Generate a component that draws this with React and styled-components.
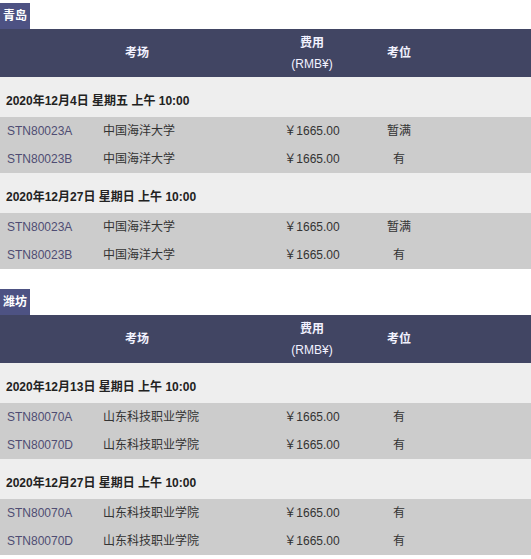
import React from "react";
import styled, { createGlobalStyle } from "styled-components";

const GlobalStyle = createGlobalStyle`
  body {
    margin: 0;
    background: #fff;
    font-family: "Liberation Sans", Arial, "Noto Sans CJK SC", sans-serif;
    font-size: 12px;
    color: #333;
  }
`;

const Page = styled.div`
  width: 531px;
  padding-top: 3px;
  display: flex;
  flex-direction: column;
  gap: 20px;
`;

const Section = styled.section`
  display: flex;
  flex-direction: column;
  align-items: flex-start;
`;

const CityTag = styled.div`
  background: #4d5283;
  color: #fff;
  font-weight: bold;
  font-size: 12px;
  height: 26px;
  line-height: 26px;
  padding: 0 3px;
`;

const Grid = styled.div`
  width: 100%;
  display: grid;
  grid-template-columns: 96px 178px 76px 98px 1fr;
`;

const HeadCell = styled.div`
  grid-column: ${props => props.span || "auto"};
  background: #414563;
  color: #f2f2ff;
  height: 48px;
  padding-top: 1px;
  box-sizing: border-box;
  display: flex;
  flex-direction: column;
  align-items: center;
  justify-content: center;
  line-height: 21px;
  font-weight: bold;
`;

const Unit = styled.span`
  font-weight: normal;
`;

const DateRow = styled.div`
  grid-column: 1 / -1;
  background: #eeeeee;
  height: 40px;
  box-sizing: border-box;
  padding: 18px 0 0 6px;
  line-height: 13px;
  font-weight: bold;
  color: #222;
`;

const Cell = styled.div`
  background: #cccccc;
  height: 28px;
  line-height: 28px;
  padding-left: ${props => (props.center ? 0 : "7px")};
  text-align: ${props => (props.center ? "center" : "left")};
  color: ${props => props.color || "#333"};
  white-space: nowrap;
`;

const data = [
  {
    city: "青岛",
    sessions: [
      {
        date: "2020年12月4日 星期五 上午 10:00",
        rows: [
          ["STN80023A", "中国海洋大学", "暂满"],
          ["STN80023B", "中国海洋大学", "有"],
        ],
      },
      {
        date: "2020年12月27日 星期日 上午 10:00",
        rows: [
          ["STN80023A", "中国海洋大学", "暂满"],
          ["STN80023B", "中国海洋大学", "有"],
        ],
      },
    ],
  },
  {
    city: "潍坊",
    sessions: [
      {
        date: "2020年12月13日 星期日 上午 10:00",
        rows: [
          ["STN80070A", "山东科技职业学院", "有"],
          ["STN80070D", "山东科技职业学院", "有"],
        ],
      },
      {
        date: "2020年12月27日 星期日 上午 10:00",
        rows: [
          ["STN80070A", "山东科技职业学院", "有"],
          ["STN80070D", "山东科技职业学院", "有"],
        ],
      },
    ],
  },
];

const App = () => (
  <>
    <GlobalStyle />
    <Page>
      {data.map(city => (
        <Section key={city.city}>
          <CityTag>{city.city}</CityTag>
          <Grid>
            <HeadCell span="span 2">考场</HeadCell>
            <HeadCell>
              <span>费用</span>
              <Unit>(RMB¥)</Unit>
            </HeadCell>
            <HeadCell>考位</HeadCell>
            <HeadCell />
            {city.sessions.map(s => (
              <React.Fragment key={s.date}>
                <DateRow>{s.date}</DateRow>
                {s.rows.map(r => (
                  <React.Fragment key={r[0]}>
                    <Cell color="#4f4d73">{r[0]}</Cell>
                    <Cell>{r[1]}</Cell>
                    <Cell center>￥1665.00</Cell>
                    <Cell center>{r[2]}</Cell>
                    <Cell />
                  </React.Fragment>
                ))}
              </React.Fragment>
            ))}
          </Grid>
        </Section>
      ))}
    </Page>
  </>
);

export default App;
